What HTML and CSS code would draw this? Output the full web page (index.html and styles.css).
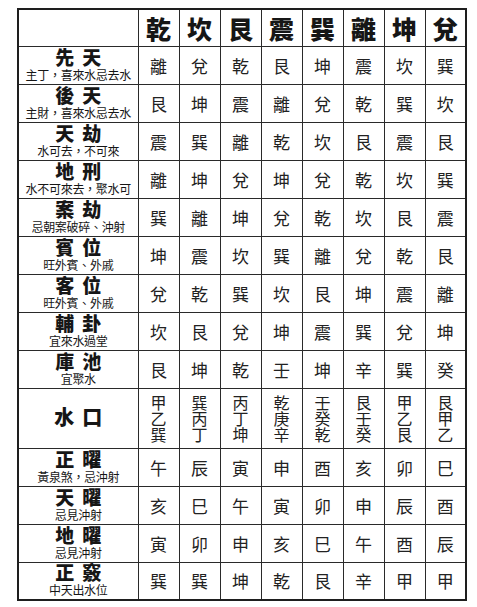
FILE: index.html
```html
<!DOCTYPE html>
<html lang="zh-Hant">
<head>
<meta charset="utf-8">
<link rel="stylesheet" href="styles.css">
</head>
<body>
<table class="chart">
  <colgroup>
    <col class="c-label"><col class="c-data"><col class="c-data"><col class="c-data"><col class="c-data"><col class="c-data"><col class="c-data"><col class="c-data"><col class="c-data">
  </colgroup>
  <thead>
    <tr class="head">
      <th></th><th>乾</th><th>坎</th><th>艮</th><th>震</th><th>巽</th><th>離</th><th>坤</th><th>兌</th>
    </tr>
  </thead>
  <tbody>
    <tr><th><div class="t">先天</div><div class="s">主丁，喜來水忌去水</div></th><td>離</td><td>兌</td><td>乾</td><td>艮</td><td>坤</td><td>震</td><td>坎</td><td>巽</td></tr>
    <tr><th><div class="t">後天</div><div class="s">主財，喜來水忌去水</div></th><td>艮</td><td>坤</td><td>震</td><td>離</td><td>兌</td><td>乾</td><td>巽</td><td>坎</td></tr>
    <tr><th><div class="t">天劫</div><div class="s">水可去，不可來</div></th><td>震</td><td>巽</td><td>離</td><td>乾</td><td>坎</td><td>艮</td><td>震</td><td>艮</td></tr>
    <tr><th><div class="t">地刑</div><div class="s">水不可來去，聚水可</div></th><td>離</td><td>坤</td><td>兌</td><td>坤</td><td>兌</td><td>乾</td><td>坎</td><td>巽</td></tr>
    <tr><th><div class="t">案劫</div><div class="s">忌朝案破碎、沖射</div></th><td>巽</td><td>離</td><td>坤</td><td>兌</td><td>乾</td><td>坎</td><td>艮</td><td>震</td></tr>
    <tr><th><div class="t">賓位</div><div class="s">旺外賓、外戚</div></th><td>坤</td><td>震</td><td>坎</td><td>巽</td><td>離</td><td>兌</td><td>乾</td><td>艮</td></tr>
    <tr><th><div class="t">客位</div><div class="s">旺外賓、外戚</div></th><td>兌</td><td>乾</td><td>巽</td><td>坎</td><td>艮</td><td>坤</td><td>震</td><td>離</td></tr>
    <tr><th><div class="t">輔卦</div><div class="s">宜來水過堂</div></th><td>坎</td><td>艮</td><td>兌</td><td>坤</td><td>震</td><td>巽</td><td>兌</td><td>坤</td></tr>
    <tr><th><div class="t">庫池</div><div class="s">宜聚水</div></th><td>艮</td><td>坤</td><td>乾</td><td>壬</td><td>坤</td><td>辛</td><td>巽</td><td>癸</td></tr>
    <tr class="water"><th><div class="t">水口</div></th>
      <td><div class="stack">甲乙巽</div></td>
      <td><div class="stack">巽丙丁</div></td>
      <td><div class="stack">丙丁坤</div></td>
      <td><div class="stack">乾庚辛</div></td>
      <td><div class="stack">壬癸乾</div></td>
      <td><div class="stack">艮壬癸</div></td>
      <td><div class="stack">甲乙艮</div></td>
      <td><div class="stack">艮甲乙</div></td>
    </tr>
    <tr><th><div class="t">正曜</div><div class="s">黃泉煞，忌沖射</div></th><td>午</td><td>辰</td><td>寅</td><td>申</td><td>酉</td><td>亥</td><td>卯</td><td>巳</td></tr>
    <tr><th><div class="t">天曜</div><div class="s">忌見沖射</div></th><td>亥</td><td>巳</td><td>午</td><td>寅</td><td>卯</td><td>申</td><td>辰</td><td>酉</td></tr>
    <tr><th><div class="t">地曜</div><div class="s">忌見沖射</div></th><td>寅</td><td>卯</td><td>申</td><td>亥</td><td>巳</td><td>午</td><td>酉</td><td>辰</td></tr>
    <tr><th><div class="t">正竅</div><div class="s">中天出水位</div></th><td>巽</td><td>巽</td><td>坤</td><td>乾</td><td>艮</td><td>辛</td><td>甲</td><td>甲</td></tr>
  </tbody>
</table>
</body>
</html>
```
FILE: styles.css
```css
html, body {
  margin: 0;
  padding: 0;
  background: #ffffff;
}
body {
  padding: 8px 0 0 17px;
  font-family: "Noto Sans CJK TC", "Noto Sans CJK SC", sans-serif;
  color: #161616;
}
.chart {
  border-collapse: collapse;
  table-layout: fixed;
  width: 450px;
  border: 2px solid #1e1e1e;
}
.c-label { width: 120px; }
.c-data { width: 41px; }
.chart th, .chart td {
  border: 1.5px solid #2a2a2a;
  padding: 0;
  text-align: center;
  vertical-align: middle;
}
.chart tr { height: 38px; }
.chart tr.head { height: 37px; }
.chart tr.water { height: 60px; }
.head th {
  font-size: 25px;
  font-weight: 900;
  line-height: 1;
  padding-top: 2px;
}
.chart td {
  font-size: 17px;
  font-weight: 400;
  line-height: 1;
  color: #222;
}
.t, .s {
  font-family: "Liberation Sans", "Noto Sans CJK TC", "Noto Sans CJK SC", sans-serif;
}
.t {
  font-size: 19px;
  font-weight: 900;
  letter-spacing: 8px;
  margin-right: -8px;
  line-height: 22px;
}
.s {
  font-size: 12px;
  font-weight: 400;
  line-height: 13px;
  letter-spacing: -0.3px;
  white-space: nowrap;
}
.water .t {
  font-size: 20px;
}
.stack {
  writing-mode: vertical-rl;
  text-orientation: upright;
  font-size: 16px;
  line-height: 18px;
  margin: 0 auto;
  padding-top: 1px;
}
```
